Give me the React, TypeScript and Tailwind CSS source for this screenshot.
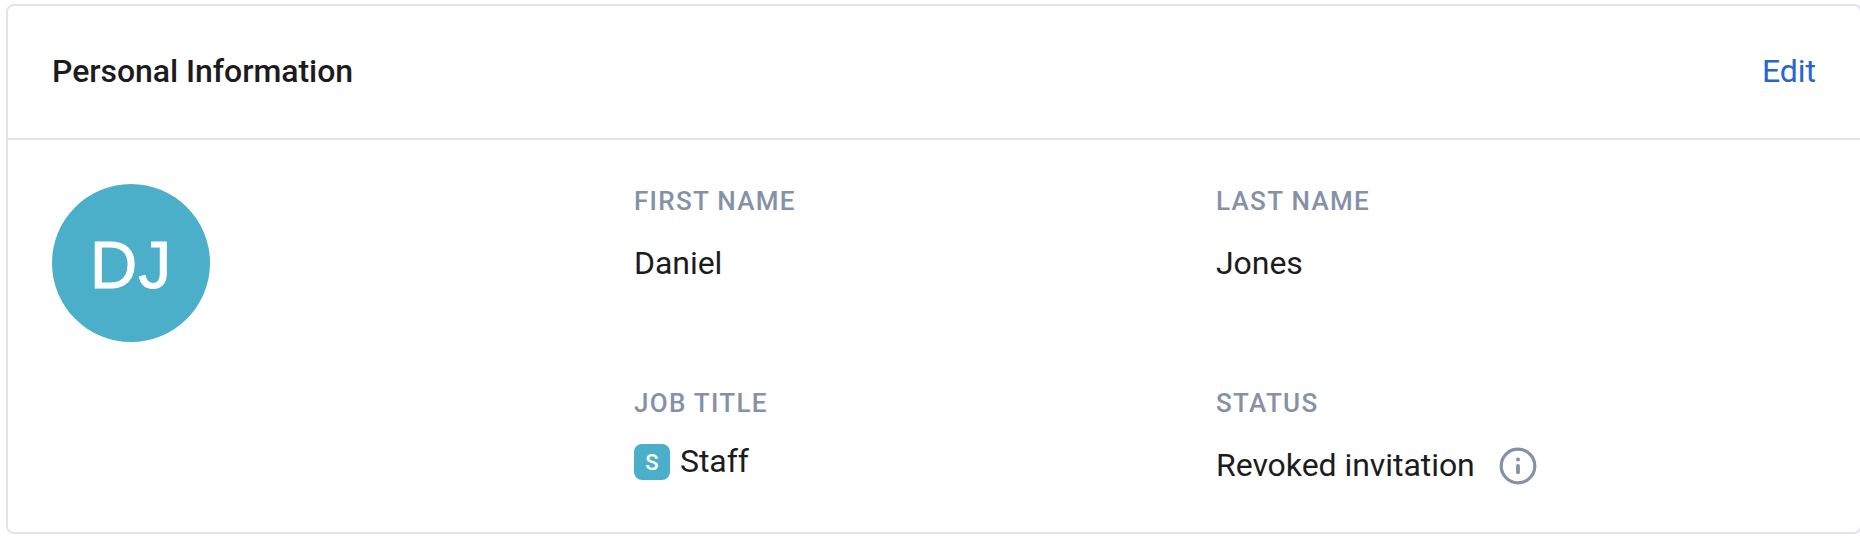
import React from 'react';

type FieldProps = { label: string; children: React.ReactNode };

function Field({ label, children }: FieldProps) {
  return (
    <div>
      <div className="text-[26px] leading-[32px] font-medium tracking-[1.3px] text-[#8491a7]">{label}</div>
      <div className="mt-[24px] h-[44px] text-[32px] leading-[44px] tracking-[-0.05px] text-[#1c1c1e]">{children}</div>
    </div>
  );
}

function InfoIcon() {
  return (
    <svg className="mt-[2px] size-[38px]" viewBox="0 0 38 38" fill="none" stroke="#8491a7" aria-hidden="true">
      <circle cx="19" cy="19" r="16.8" strokeWidth="3.2" />
      <circle cx="19" cy="12.4" r="2" fill="#8491a7" stroke="none" />
      <path d="M19 19v6.3" strokeWidth="3.8" strokeLinecap="round" />
    </svg>
  );
}

export default function App() {
  return (
    <div className="h-[536px] overflow-hidden bg-white pt-[4px] pl-[6px] font-['Roboto',sans-serif]">
      <section className="h-[530px] w-[1856px] rounded-[8px] border-2 border-[#e2e4ec]">
        <header className="flex h-[134px] items-center justify-between border-b-2 border-[#e2e4ec] pr-[44px] pb-[2px] pl-[44px] text-[32px] tracking-[-0.05px]">
          <h2 className="font-medium text-[#1c1c1e]">Personal Information</h2>
          <button className="text-[#2966cc]">Edit</button>
        </header>
        <div className="grid grid-cols-[582px_582px_1fr] pt-[44px] pl-[44px]">
          <div className="flex size-[158px] items-center justify-center rounded-full bg-[#4bafc9] pt-[3px] font-['Liberation_Sans',sans-serif] text-[66px] leading-none tracking-[0.8px] text-white [-webkit-text-stroke:0.8px_white]">
            DJ
          </div>
          <div className="flex flex-col gap-[102px] pt-px">
            <Field label="FIRST NAME">Daniel</Field>
            <Field label="JOB TITLE">
              <span className="flex h-[36px] items-center gap-[10px]">
                <span className="mt-[2px] flex size-[36px] items-center justify-center rounded-[8px] bg-[#4bafc9] pt-px text-[22px] font-medium text-white">S</span>
                Staff
              </span>
            </Field>
          </div>
          <div className="flex flex-col gap-[102px] pt-px">
            <Field label="LAST NAME">Jones</Field>
            <Field label="STATUS">
              <span className="flex h-[44px] items-center gap-[24px]">
                Revoked invitation
                <InfoIcon />
              </span>
            </Field>
          </div>
        </div>
      </section>
    </div>
  );
}
